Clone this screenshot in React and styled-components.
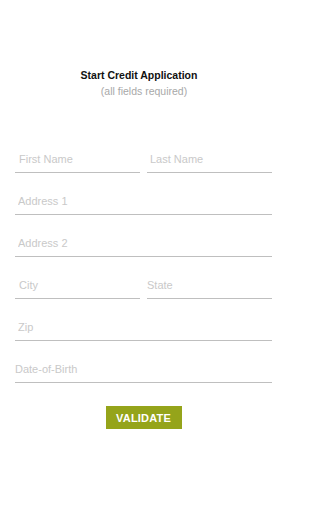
import React from "react";
import styled, { createGlobalStyle } from "styled-components";

const GlobalStyle = createGlobalStyle`
  html, body {
    margin: 0;
    padding: 0;
    background: #fff;
  }
  body {
    font-family: "Liberation Sans", Arial, sans-serif;
  }
`;

const Page = styled.div`
  width: 288px;
  height: 512px;
  background: #fff;
  padding-top: 68px;
  box-sizing: border-box;
`;

const Header = styled.div`
  display: flex;
  flex-direction: column;
  align-items: center;
`;

const Title = styled.h1`
  margin: 0;
  padding-right: 10px;
  font-size: 10.5px;
  font-weight: bold;
  color: #111;
  line-height: 14px;
`;

const Subtitle = styled.div`
  margin-top: 3px;
  font-size: 10.5px;
  color: #a8a8a8;
  line-height: 13px;
`;

const Form = styled.form`
  display: flex;
  flex-direction: column;
  padding: 0 16px 0 15px;
  margin-top: 53px;
`;

const Row = styled.div`
  display: grid;
  grid-template-columns: ${(props) => (props.split ? "1fr 1fr" : "1fr")};
  column-gap: 7px;
  margin-top: ${(props) => (props.first ? "0" : "20px")};
`;

const Field = styled.input`
  display: block;
  width: 100%;
  box-sizing: border-box;
  height: 22px;
  border: none;
  border-bottom: 1px solid #bfbfbf;
  padding: 0 0 5px ${(props) => props.indent || 0}px;
  font-family: "Liberation Sans", Arial, sans-serif;
  font-size: 11px;
  color: #333;
  background: transparent;
  outline: none;
  &::placeholder {
    color: #c9c9c9;
  }
`;

const Actions = styled.div`
  display: flex;
  justify-content: center;
  margin-top: 23px;
`;

const Button = styled.button`
  width: 76px;
  height: 23px;
  border: none;
  background: #95a41a;
  color: #fff;
  font-family: "Liberation Sans", Arial, sans-serif;
  font-weight: bold;
  font-size: 11px;
  letter-spacing: 0.2px;
  padding: 0;
  cursor: pointer;
`;

export default function App() {
  return (
    <>
      <GlobalStyle />
      <Page>
        <Header>
          <Title>Start Credit Application</Title>
          <Subtitle>(all fields required)</Subtitle>
        </Header>
        <Form onSubmit={(e) => e.preventDefault()}>
          <Row split first>
            <Field placeholder="First Name" indent={4} />
            <Field placeholder="Last Name" indent={3} />
          </Row>
          <Row>
            <Field placeholder="Address 1" indent={3} />
          </Row>
          <Row>
            <Field placeholder="Address 2" indent={3} />
          </Row>
          <Row split>
            <Field placeholder="City" indent={4} />
            <Field placeholder="State" />
          </Row>
          <Row>
            <Field placeholder="Zip" indent={3} />
          </Row>
          <Row>
            <Field placeholder="Date-of-Birth" />
          </Row>
          <Actions>
            <Button type="submit">VALIDATE</Button>
          </Actions>
        </Form>
      </Page>
    </>
  );
}
